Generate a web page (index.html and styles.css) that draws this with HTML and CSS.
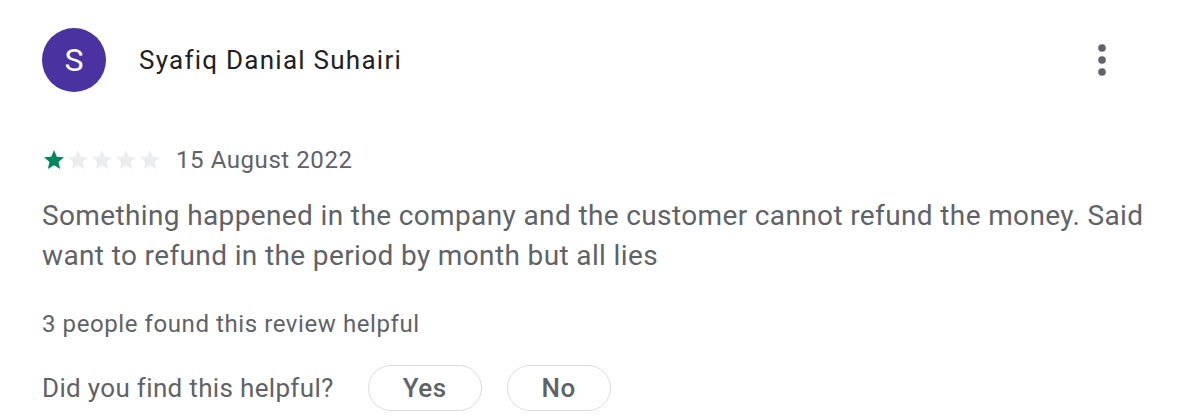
FILE: index.html
```html
<!DOCTYPE html>
<html>
<head>
<meta charset="utf-8">
<link rel="stylesheet" href="styles.css">
</head>
<body>
<div class="review">
  <div class="header">
    <div class="avatar">S</div>
    <div class="name">Syafiq Danial Suhairi</div>
    <button class="more" aria-label="More">
      <svg width="12" height="36" viewBox="0 0 12 36"><circle cx="6" cy="6" r="3.8" fill="#5f6368"/><circle cx="6" cy="18" r="3.8" fill="#5f6368"/><circle cx="6" cy="30" r="3.8" fill="#5f6368"/></svg>
    </button>
  </div>
  <div class="meta">
    <div class="stars">
      <svg class="star on" viewBox="0 0 24 24"><path d="M12 17.27L18.18 21l-1.64-7.03L22 9.24l-7.19-.61L12 2 9.19 8.63 2 9.240l5.46 4.73L5.82 21z"/></svg>
      <svg class="star" viewBox="0 0 24 24"><path d="M12 17.27L18.18 21l-1.64-7.03L22 9.24l-7.19-.61L12 2 9.19 8.63 2 9.24l5.46 4.73L5.82 21z"/></svg>
      <svg class="star" viewBox="0 0 24 24"><path d="M12 17.27L18.18 21l-1.64-7.03L22 9.24l-7.19-.61L12 2 9.19 8.63 2 9.24l5.46 4.73L5.82 21z"/></svg>
      <svg class="star" viewBox="0 0 24 24"><path d="M12 17.27L18.18 21l-1.64-7.03L22 9.24l-7.19-.61L12 2 9.19 8.63 2 9.24l5.46 4.73L5.82 21z"/></svg>
      <svg class="star" viewBox="0 0 24 24"><path d="M12 17.27L18.18 21l-1.64-7.03L22 9.24l-7.19-.61L12 2 9.19 8.63 2 9.24l5.46 4.73L5.82 21z"/></svg>
    </div>
    <span class="date">15 August 2022</span>
  </div>
  <p class="text">Something happened in the company and the customer cannot refund the money. Said want to refund in the period by month but all lies</p>
  <div class="count">3 people found this review helpful</div>
  <div class="helpful">
    <span class="q">Did you find this helpful?</span>
    <button class="pill">Yes</button>
    <button class="pill">No</button>
  </div>
</div>
</body>
</html>
```
FILE: styles.css
```css
html, body {
  margin: 0;
  padding: 0;
  background: #ffffff;
}
body {
  font-family: Roboto, "Noto Sans", Arial, sans-serif;
  color: #5f6368;
}
.review {
  padding: 28px 0 0 42px;
  width: 1130px;
}
.header {
  display: flex;
  align-items: center;
  height: 64px;
}
.avatar {
  width: 64px;
  height: 64px;
  border-radius: 50%;
  background: #4a33a1;
  color: #fff;
  font-size: 32px;
  display: flex;
  align-items: center;
  justify-content: center;
  flex: none;
}
.name {
  margin-left: 33px;
  font-size: 26px;
  letter-spacing: 1.25px;
  color: #202124;
  flex: 1;
}
.more {
  border: 0;
  background: none;
  padding: 0;
  margin-right: 64px;
  display: flex;
}
.meta {
  display: flex;
  align-items: center;
  margin-top: 53px;
  height: 30px;
}
.stars {
  display: flex;
}
.star {
  width: 24px;
  height: 24px;
  fill: #ebedef;
}
.star.on {
  fill: #01875f;
}
.date {
  margin-left: 14px;
  font-size: 24px;
  line-height: 30px;
  letter-spacing: 0.57px;
}
.text {
  margin: 21px 0 0 0;
  font-size: 28px;
  line-height: 40px;
  letter-spacing: 0.37px;
}
.count {
  margin-top: 33px;
  font-size: 24px;
  line-height: 30px;
  letter-spacing: 0.58px;
}
.helpful {
  display: flex;
  align-items: center;
  margin-top: 26px;
}
.q {
  font-size: 26px;
  letter-spacing: 0.33px;
  margin-right: 34px;
}
.pill {
  font-family: inherit;
  font-size: 26px;
  letter-spacing: 0.5px;
  color: #5f6368;
  background: #fff;
  border: 1.5px solid #dadce0;
  border-radius: 23px;
  height: 46px;
  padding: 0 34px;
  margin-right: 25px;
  font-weight: 500;
}
```
